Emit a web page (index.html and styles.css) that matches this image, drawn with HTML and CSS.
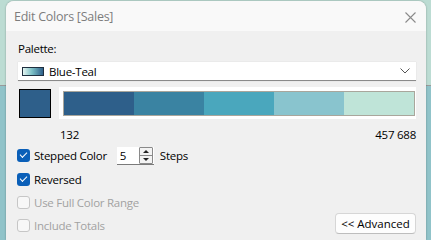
FILE: index.html
```html
<!DOCTYPE html>
<html lang="en">
<head>
    <meta charset="UTF-8">
    <meta name="viewport" content="width=device-width, initial-scale=1.0">
    <title>Edit Colors</title>
    <link rel="stylesheet" href="styles.css">
</head>
<body>
    <div class="dialog">
        <div class="titlebar">
            <span class="title">Edit Colors [Sales]</span>
            <button class="close">
                <svg width="11" height="11" viewBox="0 0 11 11">
                    <path d="M0.5 0.5 L10.5 10.5 M10.5 0.5 L0.5 10.5" stroke="#8a8a8a" stroke-width="1.1" fill="none"/>
                </svg>
            </button>
        </div>

        <div class="content">
            <div class="label">Palette:</div>

            <div class="select">
                <span class="palette-icon"></span>
                <span class="select-text">Blue-Teal</span>
                <svg class="chevron" width="10" height="6" viewBox="0 0 10 6">
                    <path d="M0.5 0.5 L5 5 L9.5 0.5" stroke="#555" stroke-width="1" fill="none"/>
                </svg>
            </div>

            <div class="preview">
                <div class="swatch"></div>
                <div class="ramp-box">
                    <div class="ramp">
                        <span style="background:#2e5f8a"></span>
                        <span style="background:#3a83a2"></span>
                        <span style="background:#4aa7bd"></span>
                        <span style="background:#89c4ce"></span>
                        <span style="background:#bfe4d8"></span>
                    </div>
                </div>
            </div>

            <div class="range">
                <span>132</span>
                <span>457 688</span>
            </div>

            <div class="options">
                <div class="option">
                    <span class="check checked"></span>
                    <span class="option-text">Stepped Color</span>
                    <div class="spin">
                        <span class="spin-value">5</span>
                        <div class="spin-btns">
                            <span class="up"></span>
                            <span class="down"></span>
                        </div>
                    </div>
                    <span class="option-text">Steps</span>
                </div>
                <div class="option">
                    <span class="check checked"></span>
                    <span class="option-text">Reversed</span>
                </div>
                <div class="option disabled">
                    <span class="check"></span>
                    <span class="option-text">Use Full Color Range</span>
                </div>
                <div class="option last disabled">
                    <span class="check"></span>
                    <span class="option-text">Include Totals</span>
                    <button class="advanced">&lt;&lt; Advanced</button>
                </div>
            </div>
        </div>
    </div>
</body>
</html>
```

FILE: styles.css
```css
html, body {
    margin: 0;
    height: 100%;
}

body {
    background: linear-gradient(to bottom, #bcdcd3 0, #bcdcd3 85px, #9a9a9a 85px, #9a9a9a 86px, #90c3c9 86px);
    font-family: "Open Sans", "Noto Sans", sans-serif;
    font-size: 11.5px;
    letter-spacing: -0.25px;
    color: #000;
    overflow: hidden;
}

.dialog {
    margin: 1px 5px 0 6px;
    height: 239px;
    background: #f0f0f0;
    border-radius: 8px 8px 0 0;
    box-shadow: 0 0 2px rgba(0, 0, 0, 0.35);
    overflow: hidden;
}

.titlebar {
    display: flex;
    align-items: center;
    justify-content: space-between;
    height: 30px;
    padding: 0 10px 0 8px;
    background: #f9f9f9;
}

.title {
    color: #7d7d7d;
    font-size: 12.5px;
}

.close {
    display: flex;
    padding: 0;
    border: none;
    background: none;
    margin-top: 2px;
}

.content {
    padding: 0 10px 0 12px;
}

.label {
    margin-top: 10px;
    line-height: 16px;
}

.select {
    display: flex;
    align-items: center;
    margin-top: 5px;
    height: 18px;
    background: #fff;
    border-bottom: 1px solid #8a8a8a;
    box-shadow: 0 0 1px rgba(0, 0, 0, 0.15);
}

.palette-icon {
    width: 20px;
    height: 7px;
    margin-left: 4px;
    border: 1px solid #1f2f3f;
    background: linear-gradient(to right, #e4f4f0, #7cc0c6 45%, #2e5f8a);
}

.select-text {
    margin-left: 5px;
    flex: 1;
}

.chevron {
    margin-right: 6px;
}

.preview {
    display: flex;
    align-items: center;
    margin-top: 6px;
}

.swatch {
    width: 30px;
    height: 27px;
    margin-left: 1px;
    background: #2e5f8a;
    border: 1px solid #000;
}

.ramp-box {
    flex: 1;
    margin-left: 8px;
    padding: 4px 1px 3px 4px;
    background: #fff;
}

.ramp {
    display: flex;
    height: 23px;
    border: 1px solid #a9a69c;
}

.ramp span {
    flex: 1;
}

.range {
    display: flex;
    justify-content: space-between;
    margin: 8px 0 0 42px;
    line-height: 16px;
}

.options {
    margin-top: 0;
}

.option {
    display: flex;
    align-items: center;
    height: 23px;
}

.option:first-child {
    height: 25px;
}

.check {
    box-sizing: border-box;
    width: 13px;
    height: 13px;
    margin-left: -1px;
    border: 1px solid #c6c6c6;
    border-radius: 3px;
    background: #f7f7f7;
}

.check.checked {
    position: relative;
    border: none;
    background: #0a5fb8;
}

.check.checked::after {
    content: '';
    position: absolute;
    left: 3px;
    top: 3px;
    width: 6px;
    height: 3px;
    border-left: 1px solid #fff;
    border-bottom: 1px solid #fff;
    transform: rotate(-45deg);
}

.option-text {
    margin-left: 4px;
}

.disabled .option-text {
    color: #a2a2a2;
}

.spin {
    display: flex;
    align-items: center;
    width: 37px;
    height: 17px;
    margin: 0 2px 0 10px;
    background: #fff;
    border-bottom: 1px solid #7a7a7a;
}

.spin-value {
    flex: 1;
    margin-left: 3px;
}

.spin-btns {
    display: flex;
    flex-direction: column;
    justify-content: space-between;
    width: 12px;
    height: 15px;
    margin-right: 1px;
    border: 1px solid #8a8a8a;
    border-radius: 1px;
    background: #f3f3f3;
}

.spin-btns span {
    flex: 1;
    display: flex;
    align-items: center;
    justify-content: center;
}

.spin-btns .up {
    border-bottom: 1px solid #8a8a8a;
}

.spin-btns .up::before {
    content: '';
    border-left: 3px solid transparent;
    border-right: 3px solid transparent;
    border-bottom: 3px solid #222;
}

.spin-btns .down::before {
    content: '';
    border-left: 3px solid transparent;
    border-right: 3px solid transparent;
    border-top: 3px solid #222;
}

.advanced {
    margin-left: auto;
    width: 81px;
    height: 21px;
    padding: 0;
    font: inherit;
    color: #000;
    background: #fdfdfd;
    border: 1px solid #d6d6d6;
    border-bottom-color: #bdbdbd;
    border-radius: 4px;
    margin-bottom: 5px;
}
```
